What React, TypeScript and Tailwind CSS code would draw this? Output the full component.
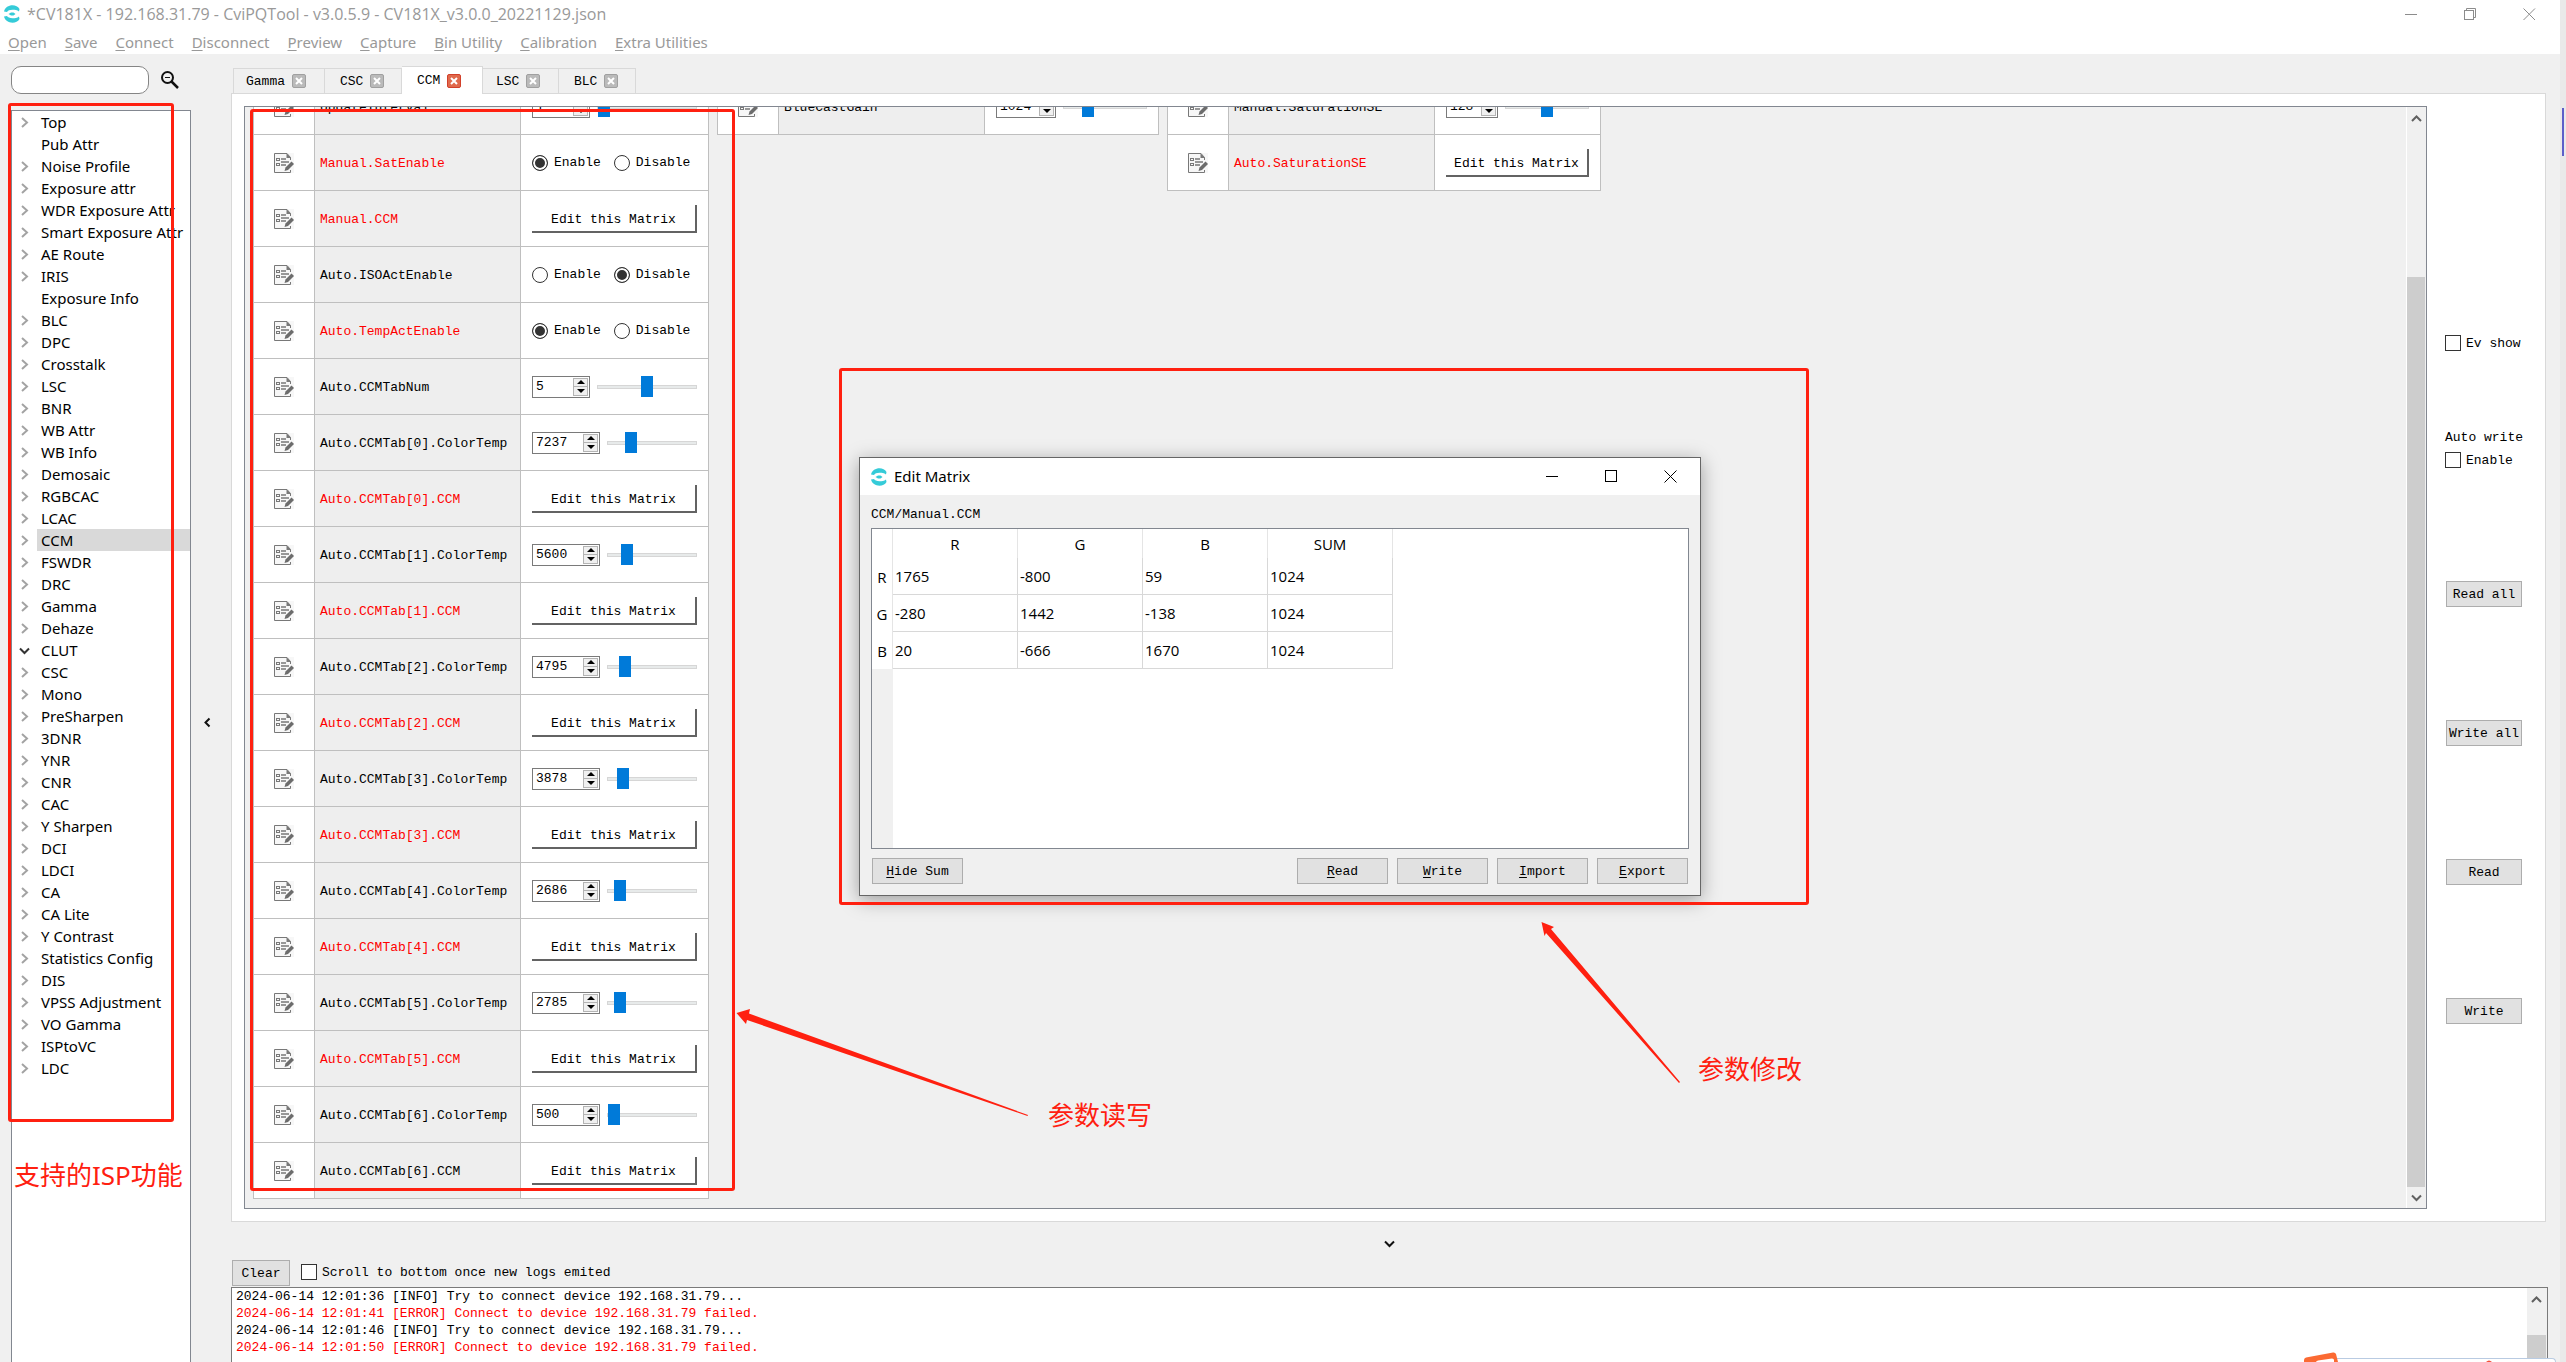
import React from "react";

const SANS = 'font-["Open_Sans","Noto_Sans_CJK_SC",sans-serif]';
const WIDE_SANS = 'font-["Noto_Sans","Noto_Sans_CJK_SC",sans-serif]';
const MONO = 'font-["Liberation_Mono","Noto_Sans_CJK_SC",monospace]';

type Row = {
  name: string;
  changed?: boolean;
  control:
    | { kind: "radio"; on: boolean }
    | { kind: "matrix" }
    | { kind: "number"; value: number; min: number; max: number; width: string };
};

const menuItems = [
  "Open",
  "Save",
  "Connect",
  "Disconnect",
  "Preview",
  "Capture",
  "Bin Utility",
  "Calibration",
  "Extra Utilities",
];

const leafItems = ["Pub Attr", "Exposure Info"];

const treeItems = [
  "Top",
  "Pub Attr",
  "Noise Profile",
  "Exposure attr",
  "WDR Exposure Attr",
  "Smart Exposure Attr",
  "AE Route",
  "IRIS",
  "Exposure Info",
  "BLC",
  "DPC",
  "Crosstalk",
  "LSC",
  "BNR",
  "WB Attr",
  "WB Info",
  "Demosaic",
  "RGBCAC",
  "LCAC",
  "CCM",
  "FSWDR",
  "DRC",
  "Gamma",
  "Dehaze",
  "CLUT",
  "CSC",
  "Mono",
  "PreSharpen",
  "3DNR",
  "YNR",
  "CNR",
  "CAC",
  "Y Sharpen",
  "DCI",
  "LDCI",
  "CA",
  "CA Lite",
  "Y Contrast",
  "Statistics Config",
  "DIS",
  "VPSS Adjustment",
  "VO Gamma",
  "ISPtoVC",
  "LDC",
];

const colorTemps = [7237, 5600, 4795, 3878, 2686, 2785, 500];

const ccmRows: Row[] = [
  { name: "UpdateInterval", control: { kind: "number", value: 1, min: 1, max: 30, width: "w-[58px]" } },
  { name: "Manual.SatEnable", changed: true, control: { kind: "radio", on: true } },
  { name: "Manual.CCM", changed: true, control: { kind: "matrix" } },
  { name: "Auto.ISOActEnable", control: { kind: "radio", on: false } },
  { name: "Auto.TempActEnable", changed: true, control: { kind: "radio", on: true } },
  { name: "Auto.CCMTabNum", control: { kind: "number", value: 5, min: 3, max: 7, width: "w-[58px]" } },
  ...colorTemps.flatMap((value, i): Row[] => [
    {
      name: `Auto.CCMTab[${i}].ColorTemp`,
      control: { kind: "number", value, min: 500, max: 30000, width: "w-[68px]" },
    },
    { name: `Auto.CCMTab[${i}].CCM`, changed: i < 6, control: { kind: "matrix" } },
  ]),
];

const gainRows: Row[] = [
  { name: "BlueCastGain", control: { kind: "number", value: 1024, min: 0, max: 4095, width: "w-[60px]" } },
];

const saturationRows: Row[] = [
  { name: "Manual.SaturationSE", control: { kind: "number", value: 128, min: 0, max: 255, width: "w-[52px]" } },
  { name: "Auto.SaturationSE", changed: true, control: { kind: "matrix" } },
];

const matrix = [
  { name: "R", cells: ["1765", "-800", "59", "1024"] },
  { name: "G", cells: ["-280", "1442", "-138", "1024"] },
  { name: "B", cells: ["20", "-666", "1670", "1024"] },
];

const logs = [
  { text: "2024-06-14 12:01:36 [INFO] Try to connect device 192.168.31.79...", error: false },
  { text: "2024-06-14 12:01:41 [ERROR] Connect to device 192.168.31.79 failed.", error: true },
  { text: "2024-06-14 12:01:46 [INFO] Try to connect device 192.168.31.79...", error: false },
  { text: "2024-06-14 12:01:50 [ERROR] Connect to device 192.168.31.79 failed.", error: true },
];

function Logo() {
  return (
    <svg width="16" height="18" viewBox="0 0 16 18" aria-hidden="true" className="shrink-0" fill="#35cbd8">
      <path d="M0 6.500 C1 2.500 4.500 0.300 8.500 0.300 C11.500 0.300 14 1.500 15.500 4 L15 6.500 C13 5 11 4.800 8.500 4.800 C5.500 4.800 4 5.600 3 7 Z" />
      <path d="M0 11.500 C1 15.500 4.500 17.700 8.500 17.700 C11.500 17.700 14 16.500 15.500 14 L15 11.500 C13 13 11 13.200 8.500 13.200 C5.500 13.200 4 12.400 3 11 Z" />
      <path d="M4.500 9 L7 7.500 H9.500 L11.500 9 L9.500 10.500 H7 Z" />
    </svg>
  );
}

function Chevron({ dir, color = "#606060", size = 11 }: { dir: "up" | "down" | "left" | "right"; color?: string; size?: number }) {
  const d = {
    up: "M1 8 L5.500 3.500 L10 8",
    down: "M1 3.500 L5.500 8 L10 3.500",
    left: "M7.500 1.500 L3.500 5.500 L7.500 9.500",
    right: "M3 1 L8 5.500 L3 10",
  }[dir];
  return (
    <svg width={size} height={size} viewBox="0 0 11 11" aria-hidden="true" className="shrink-0">
      <path d={d} fill="none" stroke={color} strokeWidth="2" />
    </svg>
  );
}

function SheetIcon() {
  return (
    <svg width="20" height="20" viewBox="0 0 20 20" aria-hidden="true">
      <rect width="20" height="20" fill="#f7f7f7" />
      <path d="M16.500 7 V4.500 L13 0.500 H0.500 V19.500 H16.500 V17" fill="none" stroke="#787878" />
      <path d="M12.500 0 V5 H17 Z" fill="#787878" />
      <rect x="2.500" y="5.500" width="3" height="2" fill="none" stroke="#787878" />
      <rect x="2.500" y="10.500" width="3" height="2" fill="none" stroke="#787878" />
      <path d="M7 6 H12 M7 9 H15 M7 12 H12" stroke="#787878" strokeWidth="1.500" />
      <path d="M10.500 18 L11.500 14.500 L17.500 8.500 L20 11 L14 17 Z" fill="#6c6c6c" />
    </svg>
  );
}

function Mnemonic({ text }: { text: string }) {
  return (
    <>
      <span className="underline underline-offset-2">{text[0]}</span>
      {text.slice(1)}
    </>
  );
}

function PushButton({ children, className }: { children: React.ReactNode; className: string }) {
  return (
    <button className={`h-[26px] border border-[#adadad] bg-[#e1e1e1] pt-0.5 whitespace-nowrap ${className}`}>
      {children}
    </button>
  );
}

function CheckBox({ label }: { label: string }) {
  return (
    <label className="flex h-4 items-center gap-[5px] whitespace-nowrap">
      <input type="checkbox" className="size-4 shrink-0 appearance-none border border-[#333] bg-white checked:bg-[#333]" />
      <span className="pt-0.5">{label}</span>
    </label>
  );
}

function NumberControl({ name, value, min, max, width }: { name: string; value: number; min: number; max: number; width: string }) {
  return (
    <div className="flex items-center gap-[7px]">
      <div className={`flex h-[22px] shrink-0 border border-[#7a7a7a] bg-white p-px ${width}`}>
        <input
          type="text"
          inputMode="numeric"
          aria-label={name}
          defaultValue={value}
          className="w-0 min-w-0 flex-1 pt-px pl-0.5 outline-none"
        />
        <div className="flex w-[15px] shrink-0 flex-col">
          <button aria-label={`Increase ${name}`} className="flex flex-1 items-center justify-center border border-[#b4b4b4] bg-[#f0f0f0]">
            <svg width="8" height="4" viewBox="0 0 8 4" aria-hidden="true">
              <path d="M0 4 L4 0 L8 4 Z" />
            </svg>
          </button>
          <button aria-label={`Decrease ${name}`} className="flex flex-1 items-center justify-center border border-t-0 border-[#b4b4b4] bg-[#f0f0f0]">
            <svg width="8" height="4" viewBox="0 0 8 4" aria-hidden="true">
              <path d="M0 0 L4 4 L8 0 Z" />
            </svg>
          </button>
        </div>
      </div>
      <input
        type="range"
        aria-label={`${name} slider`}
        min={min}
        max={max}
        defaultValue={value}
        className="h-[22px] w-0 min-w-0 flex-1 appearance-none bg-transparent [&::-webkit-slider-runnable-track]:h-1 [&::-webkit-slider-runnable-track]:border [&::-webkit-slider-runnable-track]:border-[#d6d6d6] [&::-webkit-slider-runnable-track]:bg-[#e7eaea] [&::-webkit-slider-thumb]:-mt-[10px] [&::-webkit-slider-thumb]:h-[21px] [&::-webkit-slider-thumb]:w-3 [&::-webkit-slider-thumb]:appearance-none [&::-webkit-slider-thumb]:bg-[#007ad9]"
      />
    </div>
  );
}

function RadioControl({ name, on }: { name: string; on: boolean }) {
  return (
    <fieldset className="flex items-center gap-[13px]" aria-label={name}>
      {["Enable", "Disable"].map((option, i) => (
        <label key={option} className="flex items-center gap-[6px]">
          <input
            type="radio"
            name={name}
            defaultChecked={on === (i === 0)}
            className="size-4 shrink-0 appearance-none rounded-full border border-[#333] bg-white checked:bg-[#333] checked:shadow-[inset_0_0_0_2px_#fff]"
          />
          <span className="pt-px">{option}</span>
        </label>
      ))}
    </fieldset>
  );
}

function ParamTable({ rows, widths }: { rows: Row[]; widths: [string, string, string] }) {
  return (
    <table className="table-fixed border-separate border-spacing-0 border-l border-[#bfbfbf]">
      <tbody>
        {rows.map((row) => (
          <tr key={row.name} className="h-14">
            <td className={`border-r border-b border-[#bfbfbf] bg-white p-0 ${widths[0]}`}>
              <button aria-label={`Notes for ${row.name}`} className="mx-auto block">
                <SheetIcon />
              </button>
            </td>
            <th
              scope="row"
              className={`border-r border-b border-[#bfbfbf] bg-[#eee] pt-0.5 pr-0 pb-0 pl-[5px] text-left font-normal whitespace-nowrap ${widths[1]} ${row.changed ? "text-[#fe0000]" : ""}`}
            >
              {row.name}
            </th>
            <td className={`border-r border-b border-[#bfbfbf] bg-white px-[11px] py-0 ${widths[2]}`}>
              {row.control.kind === "radio" && <RadioControl name={row.name} on={row.control.on} />}
              {row.control.kind === "matrix" && (
                <button className="block h-7 w-full border-r-2 border-b-2 border-[#636363] bg-white pt-1 whitespace-nowrap">
                  Edit this Matrix
                </button>
              )}
              {row.control.kind === "number" && <NumberControl name={row.name} {...row.control} />}
            </td>
          </tr>
        ))}
      </tbody>
    </table>
  );
}

function TitleBar() {
  return (
    <header className="flex h-[54px] shrink-0 flex-col bg-white text-[#999]">
      <div className={`flex h-7 items-center pl-1 ${SANS}`}>
        <Logo />
        <h1 className="ml-[7px] text-base whitespace-nowrap">
          *CV181X - 192.168.31.79 - CviPQTool - v3.0.5.9 - CV181X_v3.0.0_20221129.json
        </h1>
        <div className="ml-auto flex gap-[46px] pr-6">
          <button aria-label="Minimize">
            <svg width="13" height="13" viewBox="0 0 13 13" aria-hidden="true">
              <path d="M0 6.500 H12" stroke="#8c8c8c" />
            </svg>
          </button>
          <button aria-label="Restore">
            <svg width="13" height="13" viewBox="0 0 13 13" fill="none" stroke="#8c8c8c" aria-hidden="true">
              <path d="M2.500 2.500 V0.500 H11.500 V9.500 H9.500" />
              <rect x="0.500" y="2.500" width="9" height="9" />
            </svg>
          </button>
          <button aria-label="Close">
            <svg width="13" height="13" viewBox="0 0 13 13" aria-hidden="true">
              <path d="M0.500 0.500 L12 12 M12 0.500 L0.500 12" stroke="#8c8c8c" />
            </svg>
          </button>
        </div>
      </div>
      <nav className={`flex h-[26px] items-center gap-[18px] pt-0.5 pl-2 text-[15px] whitespace-nowrap ${WIDE_SANS}`}>
        {menuItems.map((item) => (
          <button key={item}>
            <Mnemonic text={item} />
          </button>
        ))}
      </nav>
    </header>
  );
}

function Sidebar() {
  return (
    <aside className={`flex w-[191px] shrink-0 flex-col pt-3 pl-[11px] ${WIDE_SANS}`}>
      <div className="flex items-center gap-3">
        <input
          type="text"
          aria-label="Search functions"
          className="h-7 w-[138px] rounded-[10px] border border-[#858585] bg-white px-2 outline-none"
        />
        <button aria-label="Search">
          <svg width="18" height="18" viewBox="0 0 18 18" fill="none" stroke="#111" aria-hidden="true">
            <circle cx="6.500" cy="6.500" r="5.500" strokeWidth="2" />
            <path d="M4 6.500 H9" strokeWidth="1" />
            <path d="M10.500 10.500 L17 17" strokeWidth="2.500" />
          </svg>
        </button>
      </div>
      <ul className="mt-4 min-h-0 flex-1 overflow-hidden border border-b-0 border-[#828790] bg-white text-[15px] leading-[22px]">
        {treeItems.map((item) => (
          <li key={item} className="flex h-[22px] items-stretch">
            <span className="flex w-[25px] shrink-0 items-center pl-[7px]">
              {!leafItems.includes(item) && (
                <button aria-label={`Expand ${item}`}>
                  {item === "CLUT" ? <Chevron dir="down" color="#333" /> : <Chevron dir="right" color="#a3a3a3" />}
                </button>
              )}
            </span>
            <button
              className={`flex-1 pl-1 text-left whitespace-nowrap ${item === "CCM" ? "bg-[#d9d9d9]" : ""}`}
            >
              {item}
            </button>
          </li>
        ))}
      </ul>
    </aside>
  );
}

function TabBar() {
  const tabs = [
    { name: "Gamma", width: "w-[92px] pl-3" },
    { name: "CSC", width: "w-[77px] pl-[15px]" },
    { name: "CCM", width: "w-[81px] pl-[15px]" },
    { name: "LSC", width: "w-[76px] pl-[13px]" },
    { name: "BLC", width: "w-[77px] pl-[15px]" },
  ];
  return (
    <div className="flex h-[27px] shrink-0 items-end pl-0.5">
      {tabs.map((tab, i) => {
        const active = tab.name === "CCM";
        return (
          <div
            key={tab.name}
            className={`flex shrink-0 items-center gap-[7px] border-t border-r border-[#d9d9d9] ${tab.width} ${
              active ? "z-10 -mb-px h-7 bg-white" : "h-[25px] bg-[#f0f0f0]"
            } ${i === 0 ? "border-l" : ""}`}
          >
            <button className={active ? "" : "pt-0.5"}>{tab.name}</button>
            <button
              aria-label={`Close ${tab.name}`}
              className={`flex size-[14px] items-center justify-center rounded-[2px] border ${
                active ? "border-[#d2402a] bg-[#e0694c]" : "border-[#a0a0a0] bg-[#bababa]"
              }`}
            >
              <svg width="8" height="8" viewBox="0 0 8 8" aria-hidden="true">
                <path d="M1 1 L7 7 M7 1 L1 7" stroke="#fff" strokeWidth="2" />
              </svg>
            </button>
          </div>
        );
      })}
    </div>
  );
}

function Workspace() {
  return (
    <section className="flex min-h-0 flex-1 border border-[#d9d9d9] bg-white py-3 pl-3">
      <div className="flex min-w-0 flex-1 border border-[#828790] bg-[#f0f0f0]">
        <div className="min-w-0 flex-1 overflow-hidden pl-2">
          <div className="-mt-7 flex items-start gap-2">
            <ParamTable rows={ccmRows} widths={["w-[61px]", "w-[206px]", "w-[188px]"]} />
            <ParamTable rows={gainRows} widths={["w-[61px]", "w-[206px]", "w-[174px]"]} />
            <ParamTable rows={saturationRows} widths={["w-[61px]", "w-[206px]", "w-[166px]"]} />
          </div>
        </div>
        <div className="flex w-5 shrink-0 flex-col border-r border-l border-r-[#f0f0f0] border-l-white">
          <button aria-label="Scroll up" className="flex h-[22px] shrink-0 items-center justify-center">
            <Chevron dir="up" />
          </button>
          <div className="flex-[148]" />
          <div className="flex-[909] bg-[#cdcdcd]" />
          <button aria-label="Scroll down" className="flex h-[21px] shrink-0 items-center justify-center">
            <Chevron dir="down" />
          </button>
        </div>
      </div>
      <div className="flex w-[118px] shrink-0 flex-col items-start pt-[229px] pl-[18px]">
        <CheckBox label="Ev show" />
        <div className="mt-[79px] flex flex-col gap-[6px]">
          <span className="leading-4">Auto write</span>
          <CheckBox label="Enable" />
        </div>
        <div className="mt-[113px] ml-px flex flex-col gap-[113px]">
          {["Read all", "Write all", "Read", "Write"].map((label) => (
            <PushButton key={label} className="w-[76px]">
              {label}
            </PushButton>
          ))}
        </div>
      </div>
    </section>
  );
}

function LogPanel() {
  return (
    <section className="flex h-[140px] shrink-0 flex-col">
      <button aria-label="Collapse log" className="flex h-[42px] w-full shrink-0 items-center justify-center">
        <Chevron dir="down" color="#111" />
      </button>
      <div className="-mt-[4px] flex h-[27px] shrink-0 items-start gap-[11px] pl-px">
        <PushButton className="w-[58px]">Clear</PushButton>
        <div className="pt-1">
          <CheckBox label="Scroll to bottom once new logs emited" />
        </div>
      </div>
      <div className="flex min-h-0 flex-1 border border-b-0 border-[#7a7a7a] bg-white">
        <ol className="min-w-0 flex-1 overflow-hidden pl-1 leading-[17px]">
          {logs.map((line) => (
            <li key={line.text} className={`whitespace-nowrap ${line.error ? "text-[#fe0000]" : ""}`}>
              {line.text}
            </li>
          ))}
        </ol>
        <div className="flex w-5 shrink-0 flex-col border-r border-[#f0f0f0] bg-[#f0f0f0]">
          <button aria-label="Scroll log up" className="flex h-[22px] shrink-0 items-center justify-center">
            <Chevron dir="up" />
          </button>
          <div className="mt-[25px] flex-1 bg-[#cdcdcd]" />
        </div>
      </div>
    </section>
  );
}

function MatrixDialog() {
  return (
    <div
      role="dialog"
      aria-label="Edit Matrix"
      className="absolute top-[457px] left-[859px] flex h-[439px] w-[842px] flex-col border border-[#666] bg-[#f0f0f0] shadow-[0_4px_18px_rgba(0,0,0,0.35)]"
    >
      <div className={`flex h-[37px] shrink-0 items-center bg-white pl-[11px] ${WIDE_SANS}`}>
        <Logo />
        <h2 className="ml-[7px] text-[15px]">Edit Matrix</h2>
        <div className="ml-auto flex gap-[46px] pr-[23px]">
          <button aria-label="Minimize dialog">
            <svg width="13" height="13" viewBox="0 0 13 13" aria-hidden="true">
              <path d="M0 6.500 H12" stroke="#000" />
            </svg>
          </button>
          <button aria-label="Maximize dialog">
            <svg width="13" height="13" viewBox="0 0 13 13" aria-hidden="true">
              <rect x="0.500" y="0.500" width="11" height="11" fill="none" stroke="#000" />
            </svg>
          </button>
          <button aria-label="Close dialog">
            <svg width="13" height="13" viewBox="0 0 13 13" aria-hidden="true">
              <path d="M0.500 0.500 L12.500 12.500 M12.500 0.500 L0.500 12.500" stroke="#000" />
            </svg>
          </button>
        </div>
      </div>
      <div className="flex min-h-0 flex-1 flex-col px-[11px] pt-3 pb-[11px]">
        <p className="leading-4">CCM/Manual.CCM</p>
        <div className="mt-[5px] flex min-h-0 flex-1 flex-col items-start border border-[#828790] bg-white">
          <table className={`table-fixed border-separate border-spacing-0 text-[15px] leading-5 ${SANS}`}>
            <thead>
              <tr className="h-[29px]">
                <td className="w-[21px] border-r border-[#e5e5e5] p-0" />
                {["R", "G", "B", "SUM"].map((head) => (
                  <th key={head} scope="col" className="w-[125px] border-r border-[#e5e5e5] p-0 font-normal">
                    {head}
                  </th>
                ))}
              </tr>
            </thead>
            <tbody>
              {matrix.map((row) => (
                <tr key={row.name} className="h-[37px]">
                  <th scope="row" className="border-r border-[#e5e5e5] p-0 font-normal">
                    {row.name}
                  </th>
                  {row.cells.map((cell, i) => (
                    <td key={i} className="border-r border-b border-[#d8d8d8] p-0 pl-0.5">
                      {cell}
                    </td>
                  ))}
                </tr>
              ))}
            </tbody>
          </table>
          <div className="w-[21px] flex-1 bg-[#f0f0f0]" />
        </div>
        <div className="mt-[9px] flex gap-[9px] px-px">
          <PushButton className="mr-auto w-[91px]">
            <Mnemonic text="Hide Sum" />
          </PushButton>
          {["Read", "Write", "Import", "Export"].map((label) => (
            <PushButton key={label} className="w-[91px]">
              <Mnemonic text={label} />
            </PushButton>
          ))}
        </div>
      </div>
    </div>
  );
}

function Annotations() {
  return (
    <div className={`pointer-events-none absolute inset-0 overflow-hidden text-[26px] leading-8 text-[#ff2010] ${WIDE_SANS}`}>
      <div className="absolute top-[103px] left-2 h-[1019px] w-[166px] rounded-[3px] border-3 border-[#ff2010]" />
      <div className="absolute top-[109px] left-[250px] h-[1082px] w-[485px] rounded-[3px] border-3 border-[#ff2010]" />
      <div className="absolute top-[368px] left-[839px] h-[537px] w-[970px] rounded-[3px] border-3 border-[#ff2010]" />
      <p className="absolute top-[1159px] left-[14px] whitespace-nowrap">支持的ISP功能</p>
      <p className="absolute top-[1099px] left-[1048px] whitespace-nowrap">参数读写</p>
      <p className="absolute top-[1053px] left-[1698px] whitespace-nowrap">参数修改</p>
      <svg width="294" height="110" viewBox="0 0 294 110" className="absolute top-[1008px] left-[736px]" aria-hidden="true">
        <path d="M0.500 5 L14 1 L13 5.500 L292 107 L291.500 108 L11 12 L10 16 Z" fill="#ff2010" />
      </svg>
      <svg width="142" height="164" viewBox="0 0 142 164" className="absolute top-[921px] left-[1540px]" aria-hidden="true">
        <path d="M1.500 1 L14 6 L11 8 L140 161 L139 162 L6 12 L4.500 15 Z" fill="#ff2010" />
      </svg>
    </div>
  );
}

export default function App() {
  return (
    <div className={`relative flex h-screen overflow-hidden bg-[#f0f0f0] text-[13px] text-black ${MONO}`}>
      <div className="flex min-w-0 flex-1 flex-col">
        <TitleBar />
        <div className="flex min-h-0 flex-1">
          <Sidebar />
          <div className="flex w-10 shrink-0 items-center justify-center">
            <button aria-label="Collapse sidebar" className="mt-7 mr-2">
              <Chevron dir="left" color="#111" />
            </button>
          </div>
          <main className="flex min-w-0 flex-1 flex-col pt-3 pr-3">
            <TabBar />
            <div className="flex min-h-0 flex-1 flex-col pr-0.5">
              <Workspace />
            </div>
            <LogPanel />
          </main>
        </div>
      </div>
      <div className="w-[6px] shrink-0 bg-[#e9e9e9] pt-[108px] pl-0.5">
        <div className="h-12 w-0.5 bg-[#5d5fc9]" />
      </div>
      <MatrixDialog />
      <div className="absolute right-2.5 bottom-0 h-1 w-[222px] rounded-tr-sm border-t border-r border-[#b9cbe2] bg-white" />
      <svg width="190" height="10" viewBox="0 0 190 10" className="absolute right-[72px] bottom-0" aria-hidden="true">
        <path d="M0 10 V8 Q0 6 2 5.500 L29 0.500 Q31 0 32 2 L34 10 Z" fill="#fb6a33" />
        <path d="M12 10 Q12 9 14 8.500 L28 6.500 Q30 6.500 30 8 V10 Z" fill="#fff" />
        <path d="M182 10 Q185 7 188 10 Z" fill="#f4503a" />
      </svg>
      <Annotations />
    </div>
  );
}
